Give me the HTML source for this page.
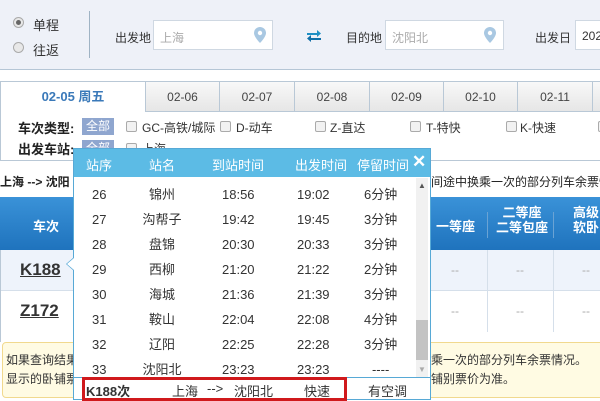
<!DOCTYPE html>
<html><head><meta charset="utf-8"><style>
*{margin:0;padding:0;box-sizing:border-box}
body{width:600px;height:400px;overflow:hidden;background:#fff;font-family:"Liberation Sans","Noto Sans CJK SC",sans-serif;font-size:12px;color:#333;position:relative}
.a{position:absolute;white-space:nowrap}
.top{left:-4px;top:-6px;width:620px;height:76px;background:#eef1f8;border:1px solid #b5c6d6;border-radius:5px}
.radio{width:11px;height:11px;border-radius:50%;border:1px solid #aaa;background:#e8e8e8}
.inp{background:#fff;border:1px solid #cfd8e2;height:30px;top:20px;color:#aaa;font-size:12px;padding:8px 0 0 6px}
.pin{width:12px;height:16px}
.tab{top:81px;height:31px;border:1px solid #b9c8d6;background:linear-gradient(#f8f8f8,#e6e6e6);text-align:center;line-height:30px;font-size:12px;color:#444}
.lbl{font-weight:bold;font-size:13px;color:#222}
.badge{background:#8fa6cf;color:#fff;width:32px;height:17px;text-align:center;line-height:17px;font-size:12px}
.cb{width:11px;height:11px;border:1px solid #aaa;border-radius:2px;background:#f2f2f2}
.f{font-size:12px;top:119px}
.pop{left:73px;top:148px;width:358px;height:252px;background:#fff;border:1px solid #57a9d6}
.ph{left:0;top:0;width:356px;height:28px;background:#5cbbe5;color:#fff;font-size:13px}
.row{font-size:13px;color:#333}
</style></head><body>
<div class="a top"></div>
<div class="a radio" style="left:13px;top:17px"><div style="width:5px;height:5px;border-radius:50%;background:#666;margin:2px"></div></div>
<div class="a radio" style="left:13px;top:42px"></div>
<div class="a" style="left:33px;top:15px;font-size:13px">单程</div>
<div class="a" style="left:33px;top:40px;font-size:13px">往返</div>
<div class="a" style="left:89px;top:11px;width:1px;height:47px;background:#9fb3c4"></div>
<div class="a" style="left:115px;top:29px;font-size:12px">出发地</div>
<div class="a inp" style="left:153px;width:120px">上海</div>
<svg class="a pin" style="left:254px;top:27px" viewBox="0 0 12 16"><path d="M6 0a6 6 0 0 1 6 6c0 4-6 10-6 10S0 10 0 6a6 6 0 0 1 6-6z" fill="#a9c8e2"/><circle cx="6" cy="6" r="2.2" fill="#fff"/></svg>
<svg class="a" style="left:306px;top:29px" width="16" height="13" viewBox="0 0 16 13"><path d="M1 4h10V1l4 3.5-4 3.5V6H1z" fill="#1d8fc4"/><path d="M15 9H5V6L1 9.5 5 13v-2h10z" fill="#0f6fa8"/></svg>
<div class="a" style="left:346px;top:29px;font-size:12px">目的地</div>
<div class="a inp" style="left:385px;width:119px">沈阳北</div>
<svg class="a pin" style="left:484px;top:27px" viewBox="0 0 12 16"><path d="M6 0a6 6 0 0 1 6 6c0 4-6 10-6 10S0 10 0 6a6 6 0 0 1 6-6z" fill="#a9c8e2"/><circle cx="6" cy="6" r="2.2" fill="#fff"/></svg>
<div class="a" style="left:535px;top:29px;font-size:12px">出发日</div>
<div class="a inp" style="left:575px;width:40px;color:#333">202</div>

<div class="a" style="left:0;top:111px;width:600px;height:50px;border-left:1px solid #b9c8d6;border-bottom:1px solid #b9c8d6"></div>
<div class="a tab" style="left:0;width:146px;background:#fff;border-bottom:none;height:31px;color:#3a79b9;font-weight:bold;font-size:13px">02-05 周五</div>
<div class="a tab" style="left:145px;width:75px">02-06</div>
<div class="a tab" style="left:219px;width:76px">02-07</div>
<div class="a tab" style="left:294px;width:76px">02-08</div>
<div class="a tab" style="left:369px;width:75px">02-09</div>
<div class="a tab" style="left:443px;width:75px">02-10</div>
<div class="a tab" style="left:517px;width:76px">02-11</div>
<div class="a tab" style="left:592px;width:20px"></div>

<div class="a lbl" style="left:18px;top:118px">车次类型:</div>
<div class="a badge" style="left:82px;top:118px">全部</div>
<div class="a cb" style="left:126px;top:121px"></div><div class="a f" style="left:142px">GC-高铁/城际</div>
<div class="a cb" style="left:220px;top:121px"></div><div class="a f" style="left:236px">D-动车</div>
<div class="a cb" style="left:315px;top:121px"></div><div class="a f" style="left:330px">Z-直达</div>
<div class="a cb" style="left:410px;top:121px"></div><div class="a f" style="left:426px">T-特快</div>
<div class="a cb" style="left:506px;top:121px"></div><div class="a f" style="left:520px">K-快速</div>
<div class="a cb" style="left:598px;top:121px"></div>
<div class="a lbl" style="left:18px;top:139px">出发车站:</div>
<div class="a badge" style="left:82px;top:140px">全部</div>
<div class="a cb" style="left:126px;top:143px"></div><div class="a" style="left:142px;top:140px;font-size:12px">上海</div>

<div class="a" style="left:0;top:173px;font-size:12px;font-weight:bold;color:#222">上海 --&gt; 沈阳</div>
<div class="a" style="left:431px;top:173px;font-size:12px;color:#222">间途中换乘一次的部分列车余票情</div>

<div class="a" style="left:0;top:197px;width:600px;height:53px;background:linear-gradient(#3a92d8,#1f73bd)"></div>
<div class="a" style="left:33px;top:216px;color:#fff;font-weight:bold;font-size:13px">车次</div>
<div class="a" style="left:436px;top:216px;color:#fff;font-weight:bold;font-size:13px">一等座</div>
<div class="a" style="left:487px;top:212px;width:1px;height:26px;background:#6aa3d4"></div>
<div class="a" style="left:496px;top:205px;color:#fff;font-weight:bold;font-size:13px;line-height:15px;text-align:center">二等座<br>二等包座</div>
<div class="a" style="left:553px;top:212px;width:1px;height:26px;background:#6aa3d4"></div>
<div class="a" style="left:573px;top:205px;color:#fff;font-weight:bold;font-size:13px;line-height:15px;text-align:center">高级<br>软卧</div>
<div class="a" style="left:0;top:250px;width:600px;height:41px;background:#eef3fb;border-bottom:1px solid #d5dfea"></div>
<div class="a" style="left:0;top:250px;width:1px;height:92px;background:#b9c8d6"></div>
<div class="a" style="left:423px;top:250px;width:1px;height:82px;background:#d5dfea"></div>
<div class="a" style="left:487px;top:250px;width:1px;height:82px;background:#d5dfea"></div>
<div class="a" style="left:553px;top:250px;width:1px;height:82px;background:#d5dfea"></div>
<div class="a" style="left:20px;top:260px;font-weight:bold;font-size:17px;text-decoration:underline;color:#333">K188</div>
<div class="a" style="left:20px;top:301px;font-weight:bold;font-size:17px;text-decoration:underline;color:#333">Z172</div>
<div class="a" style="left:451px;top:263px;color:#aaa">--</div><div class="a" style="left:516px;top:263px;color:#aaa">--</div><div class="a" style="left:582px;top:263px;color:#aaa">--</div>
<div class="a" style="left:451px;top:304px;color:#aaa">--</div><div class="a" style="left:516px;top:304px;color:#aaa">--</div><div class="a" style="left:582px;top:304px;color:#aaa">--</div>
<div class="a" style="left:2px;top:342px;width:610px;height:56px;background:#fffbe3;border:1px solid #f1d98e;border-radius:4px"></div>
<div class="a" style="left:6px;top:351px;font-size:12px">如果查询结果</div>
<div class="a" style="left:6px;top:370px;font-size:12px">显示的卧铺票</div>
<div class="a" style="left:431px;top:351px;font-size:12px">乘一次的部分列车余票情况。</div>
<div class="a" style="left:431px;top:370px;font-size:12px">铺别票价为准。</div>

<div class="a pop">
 <div class="a ph">
  <span class="a" style="left:12px;top:6px">站序</span>
  <span class="a" style="left:75px;top:6px">站名</span>
  <span class="a" style="left:138px;top:6px">到站时间</span>
  <span class="a" style="left:221px;top:6px">出发时间</span>
  <span class="a" style="left:283px;top:6px">停留时间</span>
  <span class="a" style="left:338px;top:3px;font-size:17px;font-weight:bold">✕</span>
 </div>
 <div class="a" style="left:342px;top:29px;width:12px;height:199px;background:#f1f1f1"></div>
 <div class="a" style="left:342px;top:171px;width:12px;height:40px;background:#c3c3c3"></div>
 <div class="a" style="left:344px;top:32px;font-size:8px;color:#555">▲</div>
 <div class="a" style="left:344px;top:216px;font-size:8px;color:#aaa">▼</div>
</div>
<div class="a" style="left:66px;top:257px;width:0;height:0;border-top:7px solid transparent;border-bottom:7px solid transparent;border-right:8px solid #57a9d6"></div>
<div class="a" style="left:67px;top:258px;width:0;height:0;border-top:6px solid transparent;border-bottom:6px solid transparent;border-right:7px solid #fff"></div>

<div class="a row" style="left:92px;top:182px;line-height:25px">26<br>27<br>28<br>29<br>30<br>31<br>32<br>33</div>
<div class="a row" style="left:150px;top:182px;line-height:25px;width:24px;text-align:center;overflow:visible">
<div style="width:60px;margin-left:-18px;text-align:center">锦州<br>沟帮子<br>盘锦<br>西柳<br>海城<br>鞍山<br>辽阳<br>沈阳北</div></div>
<div class="a row" style="left:222px;top:182px;line-height:25px">18:56<br>19:42<br>20:30<br>21:20<br>21:36<br>22:04<br>22:25<br>23:23</div>
<div class="a row" style="left:297px;top:182px;line-height:25px">19:02<br>19:45<br>20:33<br>21:22<br>21:39<br>22:08<br>22:28<br>23:23</div>
<div class="a row" style="left:364px;top:182px;line-height:25px;text-align:center">6分钟<br>3分钟<br>3分钟<br>2分钟<br>3分钟<br>4分钟<br>3分钟<br>----</div>
<div class="a" style="left:73px;top:377px;width:358px;height:1px;background:#57a9d6"></div>
<div class="a" style="left:82px;top:377px;width:265px;height:24px;border:3px solid #d0191c"></div>
<div class="a" style="left:86px;top:381px;font-weight:bold;font-size:13px;color:#333">K188次</div>
<div class="a" style="left:172px;top:381px;font-size:13px">上海</div>
<div class="a" style="left:207px;top:381px;font-size:13px">--&gt;</div>
<div class="a" style="left:234px;top:381px;font-size:13px">沈阳北</div>
<div class="a" style="left:304px;top:381px;font-size:13px">快速</div>
<div class="a" style="left:368px;top:381px;font-size:13px">有空调</div>
</body></html>
